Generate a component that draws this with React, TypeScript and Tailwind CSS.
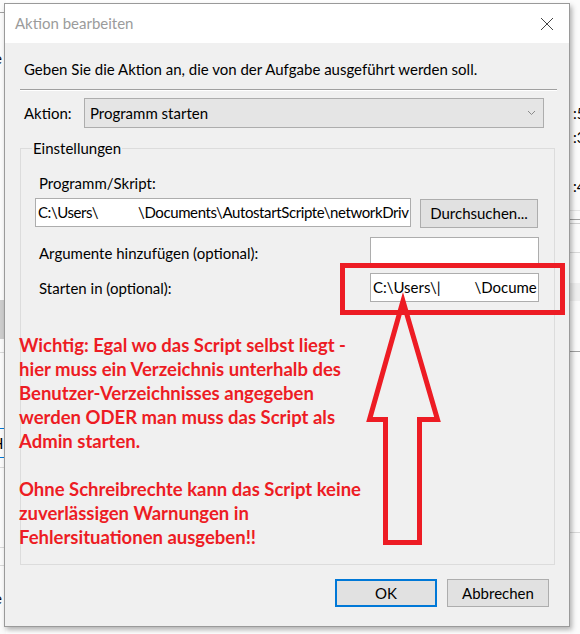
import React from "react";

// Hintergrundfenster (nur die Ränder links und rechts sichtbar)
const Backdrop = () => (
  <>
    <div className="absolute left-0 top-0 w-[6px] h-full bg-[#fbfbfb]">
      <div className="mt-[12px] h-px bg-[#a0a0a0]" />
      <div className="mt-[37px] text-[15px] leading-[16px] -ml-[6px]">e</div>
      <div className="mt-[234px] h-[39px] bg-[#cdcdcd]" />
      <div className="mt-[13px] h-px bg-[#d9d9d9]" />
      <div className="mt-[75px] h-px bg-[#0078d7]" />
      <div className="h-[28px] text-[15px] leading-[28px] -ml-[8px]">H</div>
      <div className="h-px bg-[#0078d7]" />
      <div className="mt-[9px] h-px bg-[#d9d9d9]" />
      <div className="mt-[79px] h-px bg-[#d9d9d9]" />
      <div className="mt-[17px] h-px bg-[#d9d9d9]" />
      <div className="mt-[24px] text-[15px] leading-[16px] -ml-[6px]">e</div>
    </div>
    <div className="absolute left-[570px] top-0 w-[10px] h-full bg-[#fbfbfb] text-[15px] leading-[20px]">
      <div className="mt-[103px] pl-[3px]">:57</div>
      <div className="mt-[4px] pl-[3px]">:32</div>
      <div className="mt-[29px] pl-[3px]">:48</div>
      <div className="mt-[14px] h-px bg-[#e5e5e5]" />
      <div className="mt-[8px] h-px bg-[#a0a0a0]" />
      <div className="mt-[3px] h-px bg-[#cfcfcf]" />
      <div className="mt-[28px] h-px bg-[#d9d9d9]" />
      <div className="mt-[30px] h-[18px] bg-[#efefef]" />
      <div className="mt-[50px] h-px bg-[#a0a0a0]" />
      <div className="mt-[180px] h-px bg-[#d9d9d9]" />
    </div>
  </>
);

const Input = ({ children, className = "" }: { children?: React.ReactNode; className?: string }) => (
  <div
    className={`h-[29px] shrink-0 border border-[#adadad] bg-white pl-[2px] flex items-center overflow-hidden whitespace-nowrap ${className}`}
  >
    {children}
  </div>
);

const Button = ({ label, primary = false }: { label: string; primary?: boolean }) => (
  <div
    className={`w-[102px] h-[28px] flex items-center justify-center bg-[#e1e1e1] ${
      primary ? "border-2 border-[#0078d7]" : "border border-[#adadad]"
    }`}
  >
    {label}
  </div>
);

const Dialog = () => (
  <div className="absolute left-[4px] top-[3px] w-[566px] h-[624px] flex flex-col border border-[#9a9a9a] shadow-[2px_3px_5px_rgba(0,0,0,0.3)]">
    {/* Titelleiste */}
    <div className="h-[39px] bg-white flex items-center justify-between pl-[10px] pr-[15px]">
      <span className="text-[#9b9b9b] text-[15px]">Aktion bearbeiten</span>
      <svg width="14" height="14" viewBox="0 0 14 14">
        <path d="M1 1 L13 13 M13 1 L1 13" stroke="#444" strokeWidth="1" fill="none" />
      </svg>
    </div>

    <div className="flex-1 bg-[#f0f0f0] flex flex-col">
      <div className="pl-[19px] pt-[16px] leading-[20px]">
        Geben Sie die Aktion an, die von der Aufgabe ausgeführt werden soll.
      </div>
      <div className="ml-[15px] mt-[10px] w-[537px] h-[2px] border-t border-[#a0a0a0] bg-white" />

      {/* Aktion */}
      <div className="mt-[7px] flex items-center">
        <span className="ml-[19px] w-[60px]">Aktion:</span>
        <div className="w-[460px] h-[30px] bg-[#e5e5e5] border border-[#adadad] flex items-center justify-between pl-[5px] pr-[7px]">
          <span>Programm starten</span>
          <svg width="9" height="6" viewBox="0 0 9 6">
            <path d="M1 1 L4.5 4.5 L8 1" stroke="#8a8a8a" strokeWidth="1" fill="none" />
          </svg>
        </div>
      </div>

      {/* Einstellungen */}
      <div className="ml-[15px] mt-[20px] w-[535px] h-[417px] border border-[#dcdcdc] pl-[14px] pr-[15px] flex flex-col">
        <div className="-mt-[11px] -ml-[3px] w-fit px-[1px] bg-[#f0f0f0] leading-[20px]">Einstellungen</div>
        <div className="mt-[15px] ml-[4px] h-[20px] leading-[20px]">Programm/Skript:</div>
        <div className="mt-[5px] h-[30px] flex items-start gap-[9px]">
          <Input className="w-[376px] tracking-[-0.4px]">
            <span className="shrink-0">C:\Users\</span>
            <span className="w-[40px] shrink-0" />
            <span className="shrink-0">\Documents\AutostartScripte\networkDriv</span>
          </Input>
          <div className="mt-px w-[118px] h-[29px] shrink-0 flex items-center justify-center bg-[#e1e1e1] border border-[#adadad]">
            Durchsuchen...
          </div>
        </div>
        <div className="mt-[9px] flex items-start justify-between">
          <div className="mt-[6px] ml-[4px] leading-[20px]">Argumente hinzufügen (optional):</div>
          <Input className="w-[169px]" />
        </div>
        <div className="mt-[7px] flex items-start justify-between">
          <div className="mt-[5px] ml-[4px] leading-[20px]">Starten in (optional):</div>
          <Input className="w-[169px]">
            <span className="shrink-0">C:\Users\|</span>
            <span className="w-[34px] shrink-0" />
            <span className="shrink-0">\Docume</span>
          </Input>
        </div>
      </div>

      {/* Schaltflächen */}
      <div className="mt-[14px] pr-[20px] flex justify-end gap-[10px]">
        <Button label="OK" primary />
        <Button label="Abbrechen" />
      </div>
    </div>
  </div>
);

// rote Markierungen aus dem Screenshot-Editor
const Annotation = () => (
  <>
    <svg className="absolute left-0 top-0" width="580" height="634" viewBox="0 0 580 634">
      <rect x="342.5" y="265.5" width="220" height="47" stroke="#ed1c24" strokeWidth="5" fill="none" />
      <polygon
        points="403,301 369.5,419.5 385.5,419.5 385.5,542.5 419.5,542.5 419.5,419.5 437.5,419.5"
        stroke="#ed1c24"
        strokeWidth="5"
        fill="none"
        strokeLinejoin="miter"
      />
    </svg>
    <div className="absolute left-[19px] top-[333px] text-[#ed1c24] font-bold text-[18.5px] leading-[24px] whitespace-nowrap">
      <p>Wichtig: Egal wo das Script selbst liegt -</p>
      <p>hier muss ein Verzeichnis unterhalb des</p>
      <p>Benutzer-Verzeichnisses angegeben</p>
      <p>werden ODER man muss das Script als</p>
      <p>Admin starten.</p>
      <p className="mt-[24px]">Ohne Schreibrechte kann das Script keine</p>
      <p>zuverlässigen Warnungen in</p>
      <p>Fehlersituationen ausgeben!!</p>
    </div>
  </>
);

export default function App() {
  return (
    <div className="relative w-[580px] h-[634px] overflow-hidden bg-white font-['Lato',sans-serif] text-[15px] text-black">
      <Backdrop />
      <Dialog />
      <Annotation />
    </div>
  );
}
